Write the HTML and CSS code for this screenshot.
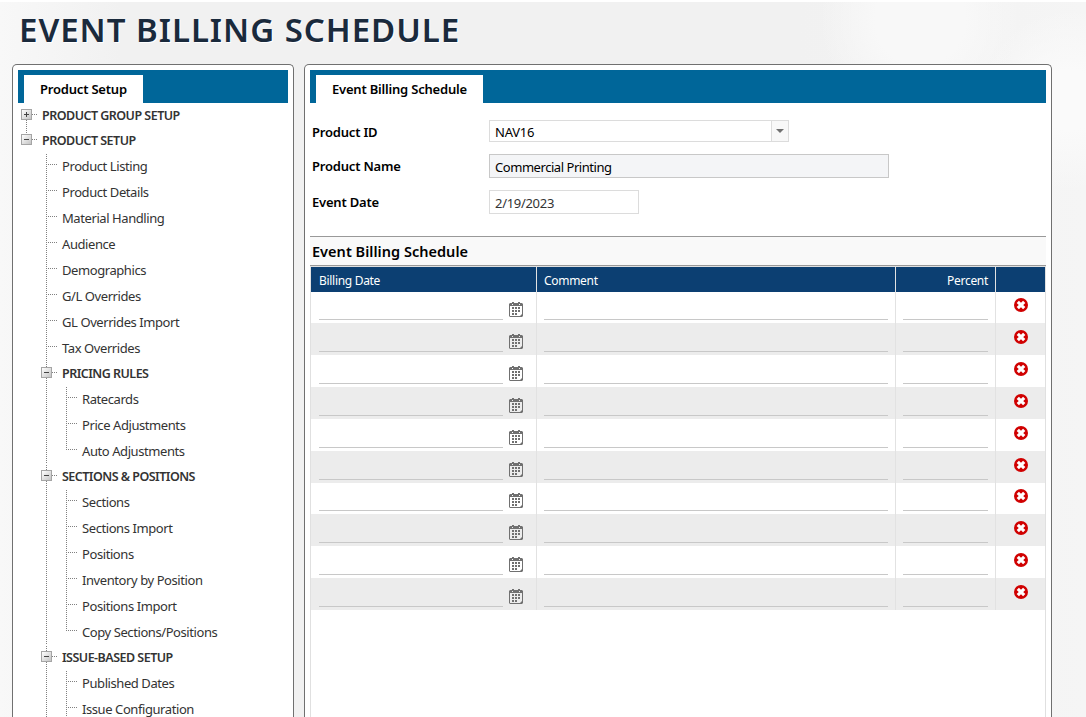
FILE: index.html
```html
<!DOCTYPE html>
<html lang="en">
<head>
<meta charset="utf-8">
<title>Event Billing Schedule</title>
<link rel="stylesheet" href="styles.css">
</head>
<body>
<svg class="defs" width="0" height="0" aria-hidden="true">
  <symbol id="cal" viewBox="0 0 14 15">
    <path fill="#707070" fill-rule="evenodd" d="M1 1h2V0h2v1h4V0h2v1h2l1 1v12l-1 1H1l-1-1V2zM1 4v10h10l2-2V4zM3 2v1h1V2zM10 2v1h1V2z"/>
    <path fill="#707070" d="M3 5h2v2H3zM6 5h2v2H6zM9 5h2v2H9zM3 8h2v2H3zM6 8h2v2H6zM9 8h2v2H9zM3 11h2v2H3zM6 11h2v2H6z"/>
  </symbol>
  <symbol id="del" viewBox="0 0 14 14">
    <circle cx="7" cy="7" r="7" fill="#d00000"/>
    <path d="M3.800 3.800L10.200 10.200M10.200 3.800L3.800 10.200" stroke="#fff" stroke-width="3.200"/>
  </symbol>
</svg>
<h1 class="title">EVENT BILLING SCHEDULE</h1>
<main class="panels">
  <aside class="panel side">
    <div class="tabbar"><div class="tab">Product Setup</div></div>
    <ul class="tree">
      <li class="first"><div class="group"><i class="toggle plus"></i><span>PRODUCT GROUP SETUP</span></div></li>
      <li class="root"><div class="group"><i class="toggle"></i><span>PRODUCT SETUP</span></div>
        <ul class="branch">
          <li class="leaf">Product Listing</li>
          <li class="leaf">Product Details</li>
          <li class="leaf">Material Handling</li>
          <li class="leaf">Audience</li>
          <li class="leaf">Demographics</li>
          <li class="leaf">G/L Overrides</li>
          <li class="leaf">GL Overrides Import</li>
          <li class="leaf">Tax Overrides</li>
          <li><div class="group"><i class="toggle"></i><span>PRICING RULES</span></div>
            <ul class="branch">
              <li class="leaf">Ratecards</li>
              <li class="leaf">Price Adjustments</li>
              <li class="leaf last">Auto Adjustments</li>
            </ul></li>
          <li><div class="group"><i class="toggle"></i><span>SECTIONS &amp; POSITIONS</span></div>
            <ul class="branch">
              <li class="leaf">Sections</li>
              <li class="leaf">Sections Import</li>
              <li class="leaf">Positions</li>
              <li class="leaf">Inventory by Position</li>
              <li class="leaf">Positions Import</li>
              <li class="leaf last">Copy Sections/Positions</li>
            </ul></li>
          <li><div class="group"><i class="toggle"></i><span>ISSUE-BASED SETUP</span></div>
            <ul class="branch">
              <li class="leaf">Published Dates</li>
              <li class="leaf">Issue Configuration</li>
            </ul></li>
        </ul></li>
    </ul>
  </aside>
  <section class="panel main">
    <div class="tabbar"><div class="tab">Event Billing Schedule</div></div>
    <div class="form">
      <label>Product ID</label>
      <div class="combo"><span>NAV16</span><b class="arrow"><svg width="8" height="4" viewBox="0 0 8 4"><path fill="#707070" d="M0 0h8L4 4z"/></svg></b></div>
      <label>Product Name</label><div class="field readonly">Commercial Printing</div>
      <label>Event Date</label><div class="field date">2/19/2023</div>
    </div>
    <h2 class="section">Event Billing Schedule</h2>
    <div class="grid">
      <div class="row head"><div>Billing Date</div><div>Comment</div><div class="num">Percent</div><div></div></div>
      <div class="row"><div><i class="line"></i><svg class="cal"><use href="#cal"/></svg></div><div><i class="line"></i></div><div><i class="line"></i></div><div class="act"><svg class="del"><use href="#del"/></svg></div></div>
      <div class="row"><div><i class="line"></i><svg class="cal"><use href="#cal"/></svg></div><div><i class="line"></i></div><div><i class="line"></i></div><div class="act"><svg class="del"><use href="#del"/></svg></div></div>
      <div class="row"><div><i class="line"></i><svg class="cal"><use href="#cal"/></svg></div><div><i class="line"></i></div><div><i class="line"></i></div><div class="act"><svg class="del"><use href="#del"/></svg></div></div>
      <div class="row"><div><i class="line"></i><svg class="cal"><use href="#cal"/></svg></div><div><i class="line"></i></div><div><i class="line"></i></div><div class="act"><svg class="del"><use href="#del"/></svg></div></div>
      <div class="row"><div><i class="line"></i><svg class="cal"><use href="#cal"/></svg></div><div><i class="line"></i></div><div><i class="line"></i></div><div class="act"><svg class="del"><use href="#del"/></svg></div></div>
      <div class="row"><div><i class="line"></i><svg class="cal"><use href="#cal"/></svg></div><div><i class="line"></i></div><div><i class="line"></i></div><div class="act"><svg class="del"><use href="#del"/></svg></div></div>
      <div class="row"><div><i class="line"></i><svg class="cal"><use href="#cal"/></svg></div><div><i class="line"></i></div><div><i class="line"></i></div><div class="act"><svg class="del"><use href="#del"/></svg></div></div>
      <div class="row"><div><i class="line"></i><svg class="cal"><use href="#cal"/></svg></div><div><i class="line"></i></div><div><i class="line"></i></div><div class="act"><svg class="del"><use href="#del"/></svg></div></div>
      <div class="row"><div><i class="line"></i><svg class="cal"><use href="#cal"/></svg></div><div><i class="line"></i></div><div><i class="line"></i></div><div class="act"><svg class="del"><use href="#del"/></svg></div></div>
      <div class="row"><div><i class="line"></i><svg class="cal"><use href="#cal"/></svg></div><div><i class="line"></i></div><div><i class="line"></i></div><div class="act"><svg class="del"><use href="#del"/></svg></div></div>
    </div>
  </section>
</main>
</body>
</html>
```
FILE: styles.css
```css
* { box-sizing: border-box; }
body {
  margin: 0;
  height: 717px;
  overflow: hidden;
  border-top: 2px solid #fff;
  font: 13px "Noto Sans", "Open Sans", sans-serif;
  color: #333;
  background:
    radial-gradient(circle at 920px 20px, #f8f8f8 0 45px, transparent 100px),
    radial-gradient(circle at 1070px 100px, #fafafa 0 30px, transparent 90px),
    linear-gradient(90deg, #f8f8f8, #f1f1f1 120px, #f1f1f1 800px, #f5f5f5);
}
.defs { display: none; }
.title {
  margin: 0;
  padding: 5px 0 0 19px;
  height: 62px;
  font-size: 33px;
  line-height: 46px;
  font-weight: 600;
  letter-spacing: 0.97px;
  color: #1a2a3c;
  text-shadow: 1px 1px 0 #fff;
  white-space: nowrap;
}
.panels { display: flex; gap: 10px; padding-left: 12px; }
.panel {
  height: 653px;
  border: 1px solid #707070;
  border-bottom: 0;
  border-radius: 5px 5px 0 0;
  background: #fff;
  padding: 5px 5px 0;
  overflow: hidden;
}
.side { width: 282px; }
.main { width: 748px; }
.tabbar { display: flex; height: 33px; padding: 5px 0 0 6px; background: #006699; }
.tab {
  padding: 0 16px;
  line-height: 28px;
  background: #fff;
  color: #000;
  font-weight: 600;
  letter-spacing: -0.2px;
  white-space: nowrap;
}
.side .tab { width: 119px; }
.main .tab { width: 167px; }

/* navigation tree: dotted connectors are painted as backgrounds */
.tree, .branch { list-style: none; margin: 0; padding: 0; }
.tree { padding-left: 3px; }
.branch { padding-left: 20px; }
.first {
  background: repeating-linear-gradient(#808080 0 1px, transparent 1px 2px) 5px 11px / 1px 14px no-repeat;
}
.root {
  background: repeating-linear-gradient(#808080 0 1px, transparent 1px 2px) 5px 0 / 1px 6px no-repeat;
}
.branch > li {
  background: repeating-linear-gradient(#808080 0 1px, transparent 1px 2px) 5px 1px / 1px 100% no-repeat;
}
.group {
  display: flex;
  align-items: flex-start;
  height: 25px;
  padding-top: 6px;
  font-weight: 600;
  font-size: 12.500px;
  letter-spacing: -0.52px;
  white-space: nowrap;
  background: repeating-linear-gradient(90deg, #808080 0 1px, transparent 1px 2px) 11px 11px / 6px 1px no-repeat;
}
.group span { margin-left: 10px; line-height: 13px; }
.toggle {
  width: 11px;
  height: 11px;
  border: 1px solid #a5a5a5;
  background:
    linear-gradient(#444, #444) 2px 4px / 5px 1px no-repeat,
    linear-gradient(135deg, #fff, #c4c4c4);
}
.toggle.plus {
  background:
    linear-gradient(#444, #444) 2px 4px / 5px 1px no-repeat,
    linear-gradient(#444, #444) 4px 2px / 1px 5px no-repeat,
    linear-gradient(135deg, #fff, #c4c4c4);
}
.branch > .leaf {
  height: 26px;
  padding-left: 21px;
  line-height: 27px;
  letter-spacing: -0.42px;
  white-space: nowrap;
  background:
    repeating-linear-gradient(90deg, #808080 0 1px, transparent 1px 2px) 5px 11px / 11px 1px no-repeat,
    repeating-linear-gradient(#808080 0 1px, transparent 1px 2px) 5px 1px / 1px 100% no-repeat;
}
.branch > .last {
  background:
    repeating-linear-gradient(90deg, #808080 0 1px, transparent 1px 2px) 5px 11px / 11px 1px no-repeat,
    repeating-linear-gradient(#808080 0 1px, transparent 1px 2px) 5px 1px / 1px 11px no-repeat;
}

.form {
  display: grid;
  grid-template-columns: 177px 400px;
  grid-template-rows: 22px 24px 24px;
  row-gap: 12px;
  height: 133px;
  padding: 17px 0 0 2px;
  color: #000;
}
.form label { font-weight: 600; line-height: 24px; letter-spacing: -0.2px; }
.combo, .field { border: 1px solid #dcdcdc; padding-left: 5px; letter-spacing: -0.45px; }
.combo { display: flex; justify-content: space-between; width: 300px; line-height: 22px; letter-spacing: -0.2px; }
.arrow {
  display: flex;
  justify-content: center;
  align-items: center;
  width: 17px;
  border-left: 1px solid #dcdcdc;
  background: #f8f8f8;
}
.readonly { border-color: #c8c8c8; background: #f4f5f7; line-height: 25px; }
.date { width: 150px; line-height: 25px; color: #333; letter-spacing: -0.3px; }
.section {
  margin: 0;
  height: 30px;
  padding-left: 2px;
  border-top: 1px solid #999;
  border-bottom: 1px solid #999;
  background: #f9f9f9;
  color: #000;
  font-size: 14.500px;
  line-height: 29px;
  font-weight: 600;
  letter-spacing: 0.03px;
}
.grid { height: 451px; border: 1px solid #e0e0e0; border-bottom: 0; }
.row {
  display: grid;
  grid-template-columns: 225px 359px 100px 50px;
  height: 32px;
}
.row:nth-child(2), .row:nth-child(8) { height: 31px; }
.row > div {
  display: flex;
  align-items: flex-end;
  padding: 0 7px 3px;
  border-left: 1px solid #e2e2e2;
}
.row > div:first-child { padding-left: 8px; border-left: 0; }
.row:nth-child(odd) { background: #ececec; }
.row.head { height: 25px; background: #0c3f72; color: #fff; font-size: 12px; }
.row.head > div { line-height: 27px; padding-bottom: 0; letter-spacing: -0.3px; }
.row.head > .num { justify-content: flex-end; }
.line { flex: 1; height: 1px; background: #c8c8c8; }
.cal { width: 14px; height: 15px; margin: 0 6px 3px 6px; }
.row > .act { justify-content: center; padding-bottom: 11px; }
.del { width: 14px; height: 14px; }
```
